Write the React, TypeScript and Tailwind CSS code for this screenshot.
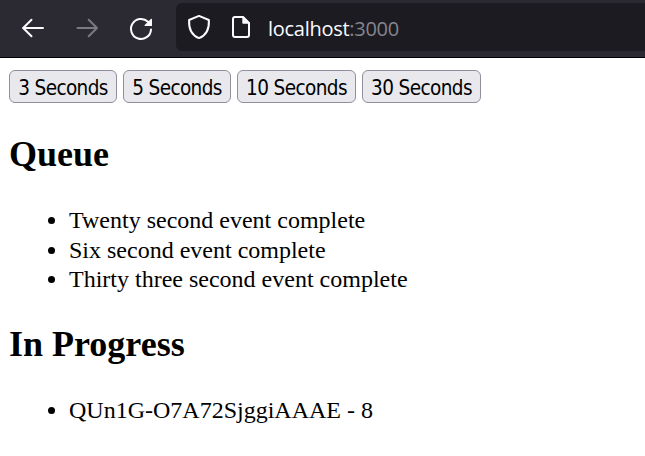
import React from "react";

const durations = [
  { seconds: 3, width: "w-[108px]" },
  { seconds: 5, width: "w-[108px]" },
  { seconds: 10, width: "w-[119px]" },
  { seconds: 30, width: "w-[119px]" },
];

const completed = [
  "Twenty second event complete",
  "Six second event complete",
  "Thirty three second event complete",
];

const running = ["QUn1G-O7A72SjggiAAAE - 8"];

function Toolbar() {
  return (
    <header className="flex h-[58px] border-b border-black bg-[#2b2a33] pt-[3px]">
      <svg className="h-12 w-[176px] shrink-0" viewBox="0 3 176 48" fill="none" stroke="#fbfbfe" strokeWidth="2" strokeLinecap="round" strokeLinejoin="round">
        <path d="M43 28H23M31.5 19.7L23.2 28L31.5 36.3" />
        <path d="M77.5 28H97M88.7 19.7L97 28L88.7 36.3" stroke="#7b7a82" />
        <path d="M151 29.6A10 10 0 1 1 148 21.8" />
        <path d="M151.3 19.6V25.4H145.2Z" fill="#fbfbfe" strokeWidth="1.4" />
      </svg>
      <div className="flex h-12 flex-1 items-center rounded-l-[6px] bg-[#1c1b22]">
        <svg className="h-12 w-[92px] shrink-0" viewBox="176 3 92 48" fill="none" stroke="#fbfbfe" strokeWidth="2" strokeLinecap="round" strokeLinejoin="round">
          <path d="M199 15.9L208.9 20C209.3 28.2 206.4 35.4 199 38.1C191.6 35.4 188.7 28.2 189.1 20Z" />
          <path d="M243 17H235Q233 17 233 19V35Q233 37 235 37H247Q249 37 249 35V23Z" />
          <path d="M243 17V23H249Z" fill="#fbfbfe" strokeWidth="1.4" />
        </svg>
        <span className="whitespace-nowrap pt-[3px] font-['Open_Sans','Noto_Sans',sans-serif] text-[20px] leading-[28px] tracking-[-0.28px] text-[#fbfbfe]">
          localhost<span className="text-[#86858c]">:3000</span>
        </span>
      </div>
    </header>
  );
}

function Section({ title, items }: { title: string; items: string[] }) {
  return (
    <section className="mt-[28.5px]">
      <h2 className="text-[36px] font-bold leading-[42px]">{title}</h2>
      <ul className="mt-[31px] list-disc pl-[60px] text-[24px] leading-[29.5px]">
        {items.map((item) => (
          <li key={item}>{item}</li>
        ))}
      </ul>
    </section>
  );
}

export default function App() {
  return (
    <div className="min-h-[456px] bg-white font-['Liberation_Serif',serif] text-black">
      <Toolbar />
      <main className="pl-[9px] pt-3">
        <div className="mb-[30px] flex gap-[6px]">
          {durations.map(({ seconds, width }) => (
            <button
              key={seconds}
              className={`${width} h-[33px] whitespace-nowrap rounded-[6px] border border-[#8f8f9d] bg-[#e9e9ed] pt-[3px] font-['DejaVu_Sans_Condensed','DejaVu_Sans',sans-serif] text-[20.5px] [font-stretch:condensed] tracking-[-0.6px] leading-[28px]`}
            >
              {seconds} Seconds
            </button>
          ))}
        </div>
        <Section title="Queue" items={completed} />
        <Section title="In Progress" items={running} />
      </main>
    </div>
  );
}
